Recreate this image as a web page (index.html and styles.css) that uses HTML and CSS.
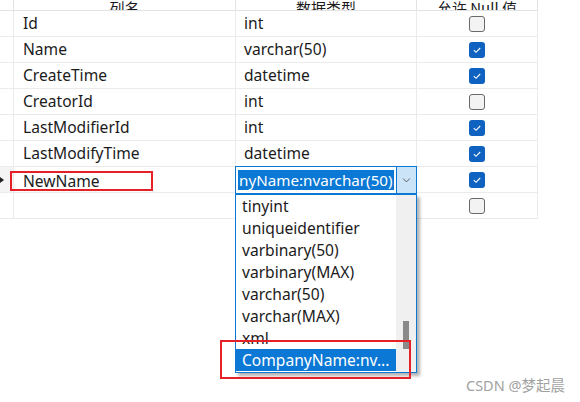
FILE: index.html
```html
<!DOCTYPE html>
<html lang="zh">
<head>
<meta charset="utf-8">
<link rel="stylesheet" href="styles.css">
</head>
<body>
<div class="page">
  <div class="grid">
    <div class="cell sel head"></div>
    <div class="cell head"><span class="htext">列名</span></div>
    <div class="cell head"><span class="htext">数据类型</span></div>
    <div class="cell head last"><span class="htext">允许 Null 值</span></div>

    <div class="cell sel"></div><div class="cell name">Id</div><div class="cell type">int</div><div class="cell chk last"><span class="box"></span></div>
    <div class="cell sel"></div><div class="cell name">Name</div><div class="cell type">varchar(50)</div><div class="cell chk last"><span class="box on"><svg viewBox="0 0 16 16" width="16" height="16"><path d="M4.8 8.2 L7 10.3 L11.2 6" fill="none" stroke="#fff" stroke-width="1.1"/></svg></span></div>
    <div class="cell sel"></div><div class="cell name">CreateTime</div><div class="cell type">datetime</div><div class="cell chk last"><span class="box on"><svg viewBox="0 0 16 16" width="16" height="16"><path d="M4.8 8.2 L7 10.3 L11.2 6" fill="none" stroke="#fff" stroke-width="1.1"/></svg></span></div>
    <div class="cell sel"></div><div class="cell name">CreatorId</div><div class="cell type">int</div><div class="cell chk last"><span class="box"></span></div>
    <div class="cell sel"></div><div class="cell name">LastModifierId</div><div class="cell type">int</div><div class="cell chk last"><span class="box on"><svg viewBox="0 0 16 16" width="16" height="16"><path d="M4.8 8.2 L7 10.3 L11.2 6" fill="none" stroke="#fff" stroke-width="1.1"/></svg></span></div>
    <div class="cell sel"></div><div class="cell name">LastModifyTime</div><div class="cell type">datetime</div><div class="cell chk last"><span class="box on"><svg viewBox="0 0 16 16" width="16" height="16"><path d="M4.8 8.2 L7 10.3 L11.2 6" fill="none" stroke="#fff" stroke-width="1.1"/></svg></span></div>
    <div class="cell sel cur"><span class="arrow"></span></div>
    <div class="cell name"><span class="hl-name">NewName</span></div>
    <div class="cell type edit">
      <div class="combo">
        <span class="combo-text"><span class="combo-sel">nyName:nvarchar(50)</span></span>
        <span class="combo-btn"><svg viewBox="0 0 20 26" width="20" height="26"><path d="M6.5 11.5 L10 15 L13.5 11.5" fill="none" stroke="#555" stroke-width="1"/></svg></span>
      </div>
      <div class="dropdown">
        <ul class="items">
          <li>tinyint</li>
          <li>uniqueidentifier</li>
          <li>varbinary(50)</li>
          <li>varbinary(MAX)</li>
          <li>varchar(50)</li>
          <li>varchar(MAX)</li>
          <li>xml</li>
          <li class="active">CompanyName:nv...</li>
        </ul>
        <div class="scroll"><span class="thumb"></span></div>
        <div class="redbox"></div>
      </div>
    </div>
    <div class="cell chk last"><span class="box on"><svg viewBox="0 0 16 16" width="16" height="16"><path d="M4.8 8.2 L7 10.3 L11.2 6" fill="none" stroke="#fff" stroke-width="1.1"/></svg></span></div>
    <div class="cell sel"></div><div class="cell name"></div><div class="cell type"></div><div class="cell chk last"><span class="box"></span></div>
  </div>
  <div class="watermark">CSDN @梦起晨</div>
</div>
</body>
</html>
```

FILE: styles.css
```css
* { box-sizing: border-box; }
html, body { margin: 0; padding: 0; background: #fff; }
body {
  font-family: "Noto Sans", "Noto Sans CJK SC", sans-serif;
  font-size: 15.6px;
  color: #1b1b1b;
  width: 580px;
  height: 402px;
  overflow: hidden;
}
.page { position: relative; width: 580px; height: 402px; }
.grid {
  display: grid;
  grid-template-columns: 14px 222px 181px 121px;
  grid-template-rows: 11px repeat(8, 26px);
}
.cell {
  border-right: 1px solid #ebebeb;
  border-bottom: 1px solid #ebebeb;
  display: flex;
  align-items: center;
  white-space: nowrap;
  position: relative;
  padding-bottom: 1px;
}
.head {
  overflow: hidden;
  align-items: flex-end;
  justify-content: center;
  border-right-color: #e3e3e3;
  border-bottom-color: #e3e3e3;
  padding-bottom: 0;
}
.htext {
  font-family: "Noto Sans CJK SC", sans-serif;
  font-size: 15px;
  line-height: 20px;
  margin-bottom: -8px;
}
.name { padding-left: 9px; }
.type { padding-left: 8px; }
.chk { justify-content: center; padding-right: 1px; padding-bottom: 0; }
.box {
  width: 16px; height: 16px;
  border: 1px solid #6a6a6a;
  border-radius: 3px;
  background: #f3f3f3;
  display: block;
}
.box.on {
  border: none;
  background: #0f62c0;
}
.box svg { display: block; }
.sel.cur { background: #f4f4f4; }
.arrow {
  position: absolute;
  left: 0; top: 10px;
  width: 0; height: 0;
  border-top: 3px solid transparent;
  border-bottom: 3px solid transparent;
  border-left: 4px solid #222;
}
.hl-name {
  margin-left: -13px;
  width: 143px;
  height: 20px;
  border: 2px solid #e52026;
  padding-left: 11px;
  display: flex;
  align-items: center;
  margin-top: 3px;
}
.edit { padding-left: 0; border-right: none; overflow: visible; z-index: 2; }
.combo {
  position: absolute;
  left: -1px; top: -1px;
  width: 182px; height: 28px;
  border: 1px solid #0a78d4;
  display: flex;
  background: #fff;
}
.combo-text {
  flex: 1;
  display: flex;
  align-items: center;
  padding-left: 2px;
  overflow: hidden;
}
.combo-sel {
  background: #0a78d4;
  color: #fff;
  font-size: 15.2px;
  line-height: 20px;
  padding: 0 1px;
}
.combo-btn {
  width: 20px;
  background: #cce4f7;
  border-left: 1px solid #0a78d4;
  display: flex;
  align-items: center;
  justify-content: center;
}
.dropdown {
  position: absolute;
  left: -1px; top: 27px;
  width: 182px; height: 179px;
  border: 1px solid #0a78d4;
  background: #fff;
  display: flex;
  box-shadow: 3px 3px 3px rgba(0,0,0,0.3);
}
.items {
  list-style: none;
  margin: 0; padding: 0;
  flex: 1;
}
.items li {
  height: 22px;
  line-height: 22px;
  padding-left: 6px;
}
.items li.active {
  background: #0a78d4;
  color: #fff;
}
.scroll {
  width: 20px;
  background: #f0f0f0;
  position: relative;
}
.thumb {
  position: absolute;
  left: 7px; top: 126px;
  width: 6px; height: 28px;
  background: #8a8a8a;
}
.redbox {
  position: absolute;
  left: -16px; top: 145px;
  width: 191px; height: 39px;
  border: 2px solid #e52026;
}
.watermark {
  position: absolute;
  left: 466px; top: 374px;
  font-family: "Noto Sans", "Noto Sans CJK SC", sans-serif;
  font-size: 14.5px;
  color: #a2a2a2;
}
```
